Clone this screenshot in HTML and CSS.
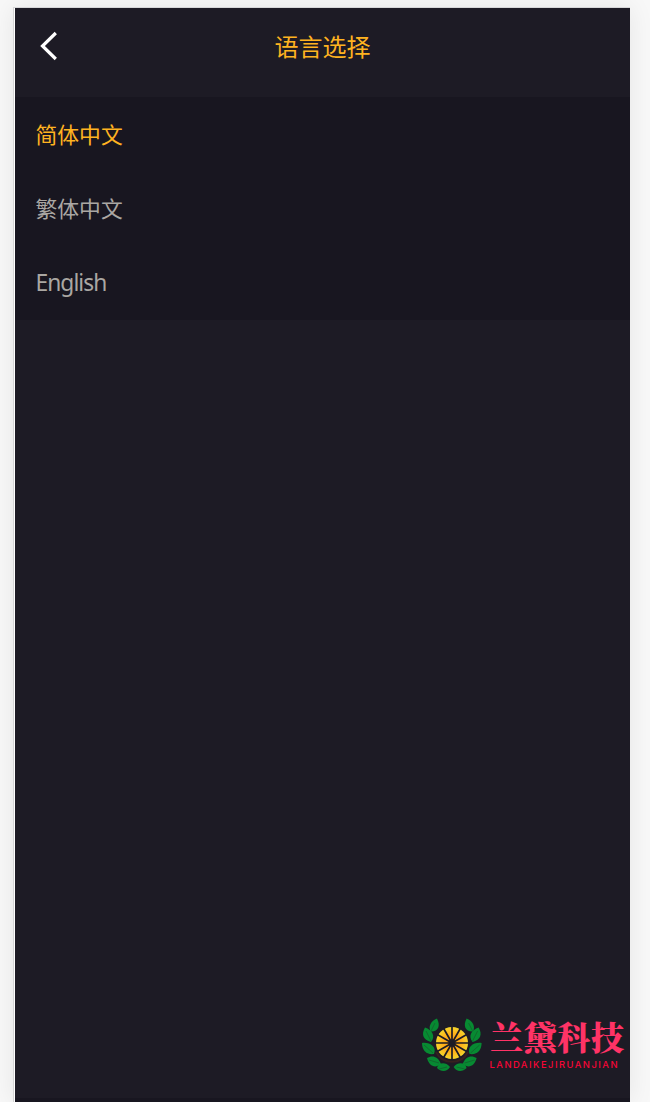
FILE: index.html
```html
<!DOCTYPE html>
<html lang="zh-CN">
<head>
<meta charset="utf-8">
<title>语言选择</title>
<link rel="stylesheet" href="styles.css">
</head>
<body>
<main class="screen">
  <header class="topbar">
    <svg class="back" viewBox="0 0 20 30" fill="none" stroke="#fff" stroke-width="3.2"><path d="M17.8 2 4.5 15 17.8 28"/></svg>
    <h1 class="title">语言选择</h1>
  </header>
  <ul class="languages">
    <li class="language selected">简体中文</li>
    <li class="language">繁体中文</li>
    <li class="language english">English</li>
  </ul>
  <footer class="brand">
    <svg class="brand-art" viewBox="0 0 213 64">
      <defs>
        <radialGradient id="gold" gradientUnits="userSpaceOnUse" cx="35" cy="28" r="16"><stop offset="0" stop-color="#ff9f12"/><stop offset=".6" stop-color="#ffb21b"/><stop offset="1" stop-color="#f5d52b"/></radialGradient>
        <g id="leaves" fill="#078a32">
          <path d="M20 3.5C14 6 11 11 13.5 16.5C21 17 24 11 20 3.5Z"/>
          <path d="M8 12.5C4 19 6 25 14 27C19 21 15 15 8 12.5Z"/>
          <path d="M5 28C5 35 9 40 17 39C20 32 13 27 5 28Z"/>
          <path d="M10 43C12 51 18 54 24 49C21 41 15 40 10 43Z"/>
          <path d="M20 53C24 57 30 57 33 52C28 46 21 48 20 53Z"/>
          <path d="M18 8 14 16M9 16 14 26M7 30 16 38M12 45 22 48M22 54 30 52" fill="none" stroke="#17502b" stroke-width=".6"/>
        </g>
      </defs>
      <path d="M19 37A18 18 0 0 0 51 37" fill="none" stroke="#38201f" stroke-width="2"/>
      <use href="#leaves"/>
      <use href="#leaves" transform="translate(69.6 0) scale(-1 1)"/>
      <circle cx="35" cy="28" r="16" fill="url(#gold)"/>
      <path d="M35 11V45M18 28H52M26.5 13.3 43.5 42.7M43.5 13.3 26.5 42.7M20.3 19.5 49.7 36.5M49.7 19.5 20.3 36.5" stroke="#1d1b25" stroke-width="1.7"/>
      <circle cx="35" cy="28" r="3.4" fill="#1d1b25"/>
      <text class="brand-name" x="73" y="35" textLength="134">兰黛科技</text>
      <text class="brand-latin" x="72.5" y="53" textLength="128">LANDAIKEJIRUANJIAN</text>
    </svg>
  </footer>
</main>
</body>
</html>
```
FILE: styles.css
```css
* { box-sizing: border-box; }
body {
  margin: 0;
  height: 1102px;
  padding: 7px 20px 0 13px;
  overflow: hidden;
  background: #f8f8f8;
  font-family: "Noto Sans", "Noto Sans CJK SC", sans-serif;
}
.screen {
  display: flex;
  flex-direction: column;
  height: 1095px;
  border-top: 1px solid #d7d7d9;
  border-left: 1px solid #d5d5d5;
  box-shadow: inset 1px 0 #fff, 0 0 24px rgba(0, 0, 0, .08);
  padding-left: 1px;
  background: linear-gradient(#1d1b25 1090px, #181620 1090px) content-box;
}
.topbar {
  display: grid;
  grid-template-columns: 50px 1fr 50px;
  height: 89px;
  padding: 23px 0 0 23px;
}
.back { width: 20px; height: 30px; }
.title {
  margin: 0 23px 0 0;
  color: #ffb320;
  font: 400 24px/30px "Noto Sans CJK SC", sans-serif;
  text-align: center;
}
.languages {
  height: 223px;
  margin: 0;
  padding: 1px 20.5px 0;
  list-style: none;
  background: #181620;
}
.language {
  height: 74px;
  color: #aaa7a3;
  font: 400 21.8px/72px "Noto Sans CJK SC", sans-serif;
}
.selected { color: #ffb320; }
.english { font-family: "Noto Sans", sans-serif; font-size: 22.8px; line-height: 74px; letter-spacing: -.95px; }
.brand { margin-top: auto; padding-left: 402px; height: 87px; }
.brand-art { display: block; width: 213px; height: 64px; overflow: visible; }
.brand-name { fill: #ff3366; font: 900 33px/1 "Noto Serif CJK SC", "Noto Sans CJK SC", serif; }
.brand-latin { fill: #f50536; font: 500 9.4px "Inter", sans-serif; }
```
